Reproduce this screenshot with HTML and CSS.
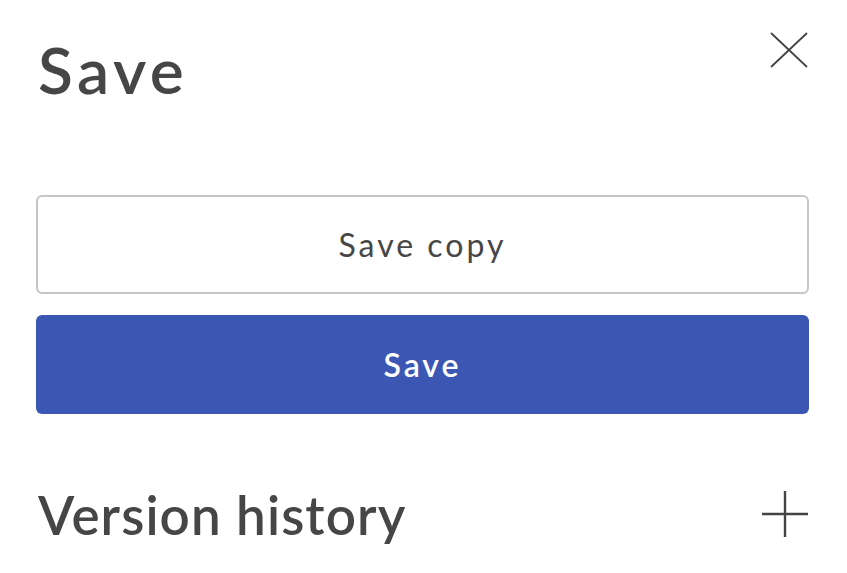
FILE: index.html
```html
<!DOCTYPE html>
<html>
<head>
<meta charset="utf-8">
<link rel="stylesheet" href="styles.css">
</head>
<body>
<div class="panel">
  <div class="header">
    <h1 class="title">Save</h1>
    <button class="icon-btn close" aria-label="Close">
      <svg width="38" height="36" viewBox="0 0 38 36"><path d="M1 1 L37 35 M37 1 L1 35" stroke="#444" stroke-width="1.8" fill="none"/></svg>
    </button>
  </div>
  <div class="actions">
    <button class="btn btn-outline">Save copy</button>
    <button class="btn btn-primary">Save</button>
  </div>
  <div class="section">
    <h2 class="section-title">Version history</h2>
    <button class="icon-btn plus" aria-label="Expand">
      <svg width="48" height="48" viewBox="0 0 48 48"><path d="M24 1 V47 M1 24 H47" stroke="#444" stroke-width="2.4" fill="none"/></svg>
    </button>
  </div>
</div>
</body>
</html>
```

FILE: styles.css
```css
html, body {
  margin: 0;
  padding: 0;
  background: #fff;
}
body {
  font-family: Lato, "Noto Sans", sans-serif;
  color: #464646;
}
.panel {
  padding: 0 38px 0 36px;
}
.header {
  display: flex;
  justify-content: space-between;
  align-items: flex-start;
  height: 195px;
}
.title {
  margin: 30px 0 0 2px;
  font-size: 64px;
  font-weight: 600;
  letter-spacing: 4.5px;
  line-height: 80px;
}
.icon-btn {
  background: none;
  border: 0;
  padding: 0;
  display: block;
}
.close {
  margin-top: 32px;
  margin-right: 1px;
}
.actions {
  display: flex;
  flex-direction: column;
  gap: 21px;
}
.btn {
  height: 99px;
  border-radius: 6px;
  font-family: Lato, "Noto Sans", sans-serif;
  font-size: 32px;
  letter-spacing: 3px;
  width: 100%;
}
.btn-outline {
  background: #fff;
  border: 2px solid #c6c6c6;
  color: #464646;
}
.btn-primary {
  background: #3c56b3;
  border: 0;
  color: #fff;
  font-weight: 600;
}
.section {
  display: flex;
  justify-content: space-between;
  align-items: center;
  margin-top: 66px;
}
.section-title {
  margin: 0 0 0 2px;
  font-size: 53px;
  font-weight: 600;
  letter-spacing: 1.1px;
  line-height: 70px;
}
.plus {
  margin-right: 0;
}
```
